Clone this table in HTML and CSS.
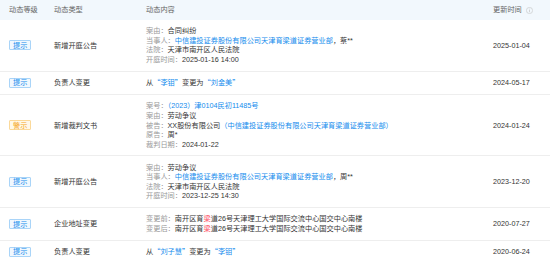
FILE: index.html
```html
<!DOCTYPE html>
<html lang="zh">
<head>
<meta charset="utf-8">
<link rel="stylesheet" href="styles.css">
</head>
<body>
<table class="tbl">
  <colgroup>
    <col class="c1"><col class="c2"><col class="c3"><col class="c4">
  </colgroup>
  <thead>
    <tr>
      <th>动态等级</th>
      <th>动态类型</th>
      <th>动态内容</th>
      <th><span class="th-time">更新时间<svg class="info" viewBox="0 0 14 14" width="7" height="7"><circle cx="7" cy="7" r="6.2" fill="none" stroke="#c4c4c4" stroke-width="1.2"/><rect x="6.3" y="5.8" width="1.4" height="4.6" fill="#c4c4c4"/><rect x="6.3" y="3.4" width="1.4" height="1.4" fill="#c4c4c4"/></svg></span></th>
    </tr>
  </thead>
  <tbody>
    <tr>
      <td><span class="tag tag-info">提示</span></td>
      <td><div class="ln">新增开庭公告</div></td>
      <td>
        <div class="ln"><span class="lb">案由：</span>合同纠纷</div>
        <div class="ln"><span class="lb">当事人：</span><span class="lk">中信建投证券股份有限公司天津育梁道证券营业部</span>，蔡**</div>
        <div class="ln"><span class="lb">法院：</span>天津市南开区人民法院</div>
        <div class="ln"><span class="lb">开庭时间：</span>2025-01-16 14:00</div>
      </td>
      <td><div class="ln">2025-01-04</div></td>
    </tr>
    <tr>
      <td><span class="tag tag-info">提示</span></td>
      <td><div class="ln">负责人变更</div></td>
      <td><div class="ln">从<span class="lk cjk">“李钼”</span>变更为<span class="lk cjk">“刘金美”</span></div></td>
      <td><div class="ln">2024-05-17</div></td>
    </tr>
    <tr>
      <td><span class="tag tag-warn">警示</span></td>
      <td><div class="ln">新增裁判文书</div></td>
      <td>
        <div class="ln"><span class="lb">案号：</span><span class="lk">（2023）津0104民初11485号</span></div>
        <div class="ln"><span class="lb">案由：</span>劳动争议</div>
        <div class="ln"><span class="lb">被告：</span>XX股份有限公司<span class="lk">（中信建投证券股份有限公司天津育梁道证券营业部）</span></div>
        <div class="ln"><span class="lb">原告：</span>周*</div>
        <div class="ln"><span class="lb">裁判日期：</span>2024-01-22</div>
      </td>
      <td><div class="ln">2024-01-24</div></td>
    </tr>
    <tr>
      <td><span class="tag tag-info">提示</span></td>
      <td><div class="ln">新增开庭公告</div></td>
      <td>
        <div class="ln"><span class="lb">案由：</span>劳动争议</div>
        <div class="ln"><span class="lb">当事人：</span><span class="lk">中信建投证券股份有限公司天津育梁道证券营业部</span>，周**</div>
        <div class="ln"><span class="lb">法院：</span>天津市南开区人民法院</div>
        <div class="ln"><span class="lb">开庭时间：</span>2023-12-25 14:30</div>
      </td>
      <td><div class="ln">2023-12-20</div></td>
    </tr>
    <tr>
      <td><span class="tag tag-info">提示</span></td>
      <td><div class="ln">企业地址变更</div></td>
      <td>
        <div class="ln"><span class="lb">变更前：</span>南开区育<em class="hl">梁</em>道26号天津理工大学国际交流中心国交中心南楼</div>
        <div class="ln"><span class="lb">变更后：</span>南开区育<em class="hl">梁</em>道26号天津理工大学国际交流中心国交中心南楼</div>
      </td>
      <td><div class="ln">2020-07-27</div></td>
    </tr>
    <tr>
      <td><span class="tag tag-info">提示</span></td>
      <td><div class="ln">负责人变更</div></td>
      <td><div class="ln">从<span class="lk cjk">“刘子慧”</span>变更为<span class="lk cjk">“李钼”</span></div></td>
      <td><div class="ln">2020-06-24</div></td>
    </tr>
  </tbody>
</table>
</body>
</html>
```

FILE: styles.css
```css
html, body {
  margin: 0;
  padding: 0;
  background: #ffffff;
}
body {
  font-family: "Liberation Sans", "Noto Sans CJK SC", sans-serif;
  font-size: 7.2px;
  line-height: 9.6px;
  color: #333333;
  overflow: hidden;
}
.tbl {
  width: 550px;
  border-collapse: collapse;
  table-layout: fixed;
}
.c1 { width: 45px; }
.c2 { width: 92px; }
.c3 { width: 347px; }
.c4 { width: 66px; }
th {
  background: #f2f8fd;
  color: #666666;
  font-weight: normal;
  text-align: left;
  height: 20px;
  padding: 0 0 0 9px;
  box-sizing: border-box;
}
td {
  padding: 6.2px 0 6.2px 9px;
  vertical-align: middle;
  border-bottom: 1px solid #eeeeee;
  white-space: nowrap;
}
.ln {
  height: 9.6px;
  line-height: 9.6px;
  overflow: visible;
}
.th-time {
  display: inline-flex;
  align-items: center;
  gap: 4px;
}
.info { display: block; }
.tag {
  display: block;
  width: fit-content;
  line-height: 7px;
  padding: 0.5px 3px;
  border: 1px solid;
  border-radius: 1px;
}
.tag-info {
  color: #128bed;
  background: #f1f8fe;
  border-color: #a9d4f8;
}
.tag-warn {
  color: #f5a623;
  background: #fff8ea;
  border-color: #fbd99a;
}
.lb { color: #999999; }
.lk { color: #128bed; }
.cjk { font-family: "Noto Sans CJK SC", sans-serif; }
.hl { color: #fd485e; font-style: normal; }
```
